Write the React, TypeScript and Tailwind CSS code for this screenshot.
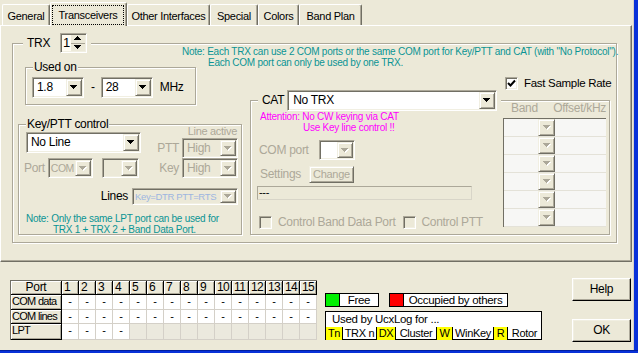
import React from "react";

// Windows classic 3D edges
const sunken =
  "border border-t-[#ACA899] border-l-[#ACA899] border-b-white border-r-white shadow-[inset_1px_1px_0_#716F64,inset_-1px_-1px_0_#F1EFE2]";
const raised =
  "border border-t-[#F1EFE2] border-l-[#F1EFE2] border-b-[#716F64] border-r-[#716F64] shadow-[inset_1px_1px_0_#fff,inset_-1px_-1px_0_#ACA899]";
const etched = "border border-[#ACA899] shadow-[inset_1px_1px_0_#fff,1px_1px_0_#fff]";
const gray = "text-[#ACA899]";
const teal = "text-[#0A9494]";

function Arrow({ disabled, up }: { disabled?: boolean; up?: boolean }) {
  const c = disabled ? "#ACA899" : "#000";
  const rows = up ? [3, 2, 1, 0] : [0, 1, 2, 3];
  return (
    <svg width="8" height="5" viewBox="0 0 8 5" shapeRendering="crispEdges">
      {disabled &&
        rows.map((r, i) => <rect key={"s" + i} x={r + 1} y={i + 1} width={7 - 2 * r} height={1} fill="#fff" />)}
      {rows.map((r, i) => (
        <rect key={i} x={r} y={i} width={7 - 2 * r} height={1} fill={c} />
      ))}
    </svg>
  );
}

function Combo({
  className = "",
  value = "",
  disabled,
  field = "bg-white",
  text = "",
}: {
  className?: string;
  value?: string;
  disabled?: boolean;
  field?: string;
  text?: string;
}) {
  return (
    <div className={`flex items-stretch p-[1px] ${sunken} ${field} ${className}`}>
      <div className={`flex-1 min-w-0 flex items-center pl-[3px] overflow-hidden whitespace-nowrap ${disabled ? gray : ""} ${text}`}>
        {value}
      </div>
      <div className={`w-[16px] shrink-0 flex items-center justify-center bg-[#ECE9D8] ${raised}`}>
        <Arrow disabled={disabled} />
      </div>
    </div>
  );
}

function Check({ checked, disabled }: { checked?: boolean; disabled?: boolean }) {
  return (
    <div className={`w-[13px] h-[13px] shrink-0 flex items-center justify-center ${sunken} ${disabled ? "bg-[#ECE9D8]" : "bg-white"}`}>
      {checked && (
        <svg width="9" height="9" viewBox="0 0 9 9">
          <path d="M1 4 L3.5 6.5 L8 1.5" stroke="#000" strokeWidth="2" fill="none" />
        </svg>
      )}
    </div>
  );
}

function Group({ className = "", label, children }: { className?: string; label?: React.ReactNode; children?: React.ReactNode }) {
  return (
    <div className={`relative ${etched} ${className}`}>
      {label && <div className="absolute top-[-7px] left-[7px] px-[1px] bg-[#ECE9D8] leading-[13px]">{label}</div>}
      {children}
    </div>
  );
}

function Tab({ label, className }: { label: string; className: string }) {
  return (
    <div
      className={`h-[21px] flex justify-center pt-[5px] border-t border-l border-r border-t-white border-l-white border-r-[#716F64] shadow-[inset_-1px_0_0_#ACA899] rounded-t-[2px] ${className}`}
    >
      {label}
    </div>
  );
}

const ports = Array.from({ length: 15 }, (_, i) => i + 1);
const headCell =
  "bg-[#ECE9D8] border-r border-b border-black shadow-[inset_1px_1px_0_#fff,inset_-1px_-1px_0_#ACA899] leading-[13px] overflow-hidden";
const btn =
  "w-[59px] h-[23px] bg-[#ECE9D8] text-[12px] border border-t-white border-l-white border-b-black border-r-black shadow-[inset_-1px_-1px_0_#ACA899,inset_1px_1px_0_#F1EFE2]";

export default function App() {
  return (
    <div className="relative w-[638px] h-[353px] overflow-hidden bg-[#ECE9D8] text-black text-[11px] leading-[13px] tracking-[-0.3px] font-['Liberation_Sans',Arial,sans-serif]">
      {/* tabs */}
      <div className="relative z-10 flex items-end h-[25px] pl-[2px]">
        <Tab label="General" className="w-[48px]" />
        <div className="w-[77px] h-[24px] mb-[-1px] bg-[#ECE9D8] border-t border-l border-r border-t-white border-l-white border-r-[#716F64] shadow-[inset_-1px_0_0_#ACA899] rounded-t-[2px] pl-[1px] pt-[2px]">
          <div className="w-[72px] h-[20px] flex items-center justify-center border border-dotted border-black">Transceivers</div>
        </div>
        <Tab label="Other Interfaces" className="w-[83px]" />
        <Tab label="Special" className="w-[48px]" />
        <Tab label="Colors" className="w-[41px]" />
        <Tab label="Band Plan" className="w-[63px]" />
      </div>

      {/* tab page */}
      <div className="w-[632px] h-[237px] border-t border-l border-r border-b border-t-white border-l-white border-r-[#716F64] border-b-[#716F64] shadow-[inset_-1px_-1px_0_#ACA899] pl-[11px] pt-[17px]">
        <div className={`relative w-[605px] h-[200px] ${etched}`}>
          <div className="absolute left-[10px] top-[-11px] flex items-center bg-[#ECE9D8] px-[4px]">
            <span className="text-[12px]">TRX</span>
            <div className={`ml-[10px] w-[27px] h-[20px] flex p-[1px] bg-[#FFFCF2] ${sunken}`}>
              <span className="flex-1 text-[13px] leading-[16px] pl-[1px]">1</span>
              <div className="w-[14px] flex flex-col bg-[#ECE9D8]">
                <div className="flex-1 flex items-center justify-center border-b border-[#ACA899]">
                  <Arrow up />
                </div>
                <div className="flex-1 flex items-center justify-center">
                  <Arrow />
                </div>
              </div>
            </div>
          </div>

          <div className={`ml-[169px] mt-[2px] h-[19px] text-[10px] leading-[11px] tracking-[-0.25px] whitespace-nowrap ${teal}`}>
            <div>Note: Each TRX can use 2 COM ports or the same COM port for Key/PTT and CAT (with "No Protocol").</div>
            <div className="pl-[26px]">Each COM port can only be used by one TRX.</div>
          </div>

          <div className="flex">
            {/* left column */}
            <div className="w-[230px] shrink-0">
              <Group label={<span className="text-[12px]">Used on</span>} className="ml-[12px] mt-[2px] w-[171px] h-[38px]">
                <div className="flex items-center pl-[6px] pt-[9px] text-[12px]">
                  <Combo value="1.8" className="w-[52px] h-[21px]" />
                  <span className="ml-[7px]">-</span>
                  <Combo value="28" className="ml-[6px] w-[52px] h-[21px]" />
                  <span className="ml-[7px]">MHz</span>
                </div>
              </Group>

              <Group label={<span className="text-[12px]">Key/PTT control</span>} className="ml-[5px] mt-[19px] w-[224px] h-[111px]">
                <div className="flex justify-between">
                  <Combo value="No Line" text="text-[12px]" className="ml-[7px] mt-[7px] w-[115px] h-[21px]" />
                  <div className="flex flex-col items-end mr-[3px]">
                    <span className={`h-[13px] pr-[1px] ${gray}`}>Line active</span>
                    <div className="flex items-center h-[20px]">
                      <span className={`text-[12px] ${gray}`}>PTT</span>
                      <Combo value="High" disabled field="bg-[#ECE9D8]" text="text-[12px]" className="ml-[3px] w-[56px] h-[20px]" />
                    </div>
                  </div>
                </div>
                <div className="flex items-center h-[20px]">
                  <span className={`ml-[5px] text-[12px] ${gray}`}>Port</span>
                  <Combo value="COM" disabled field="bg-[#ECE9D8]" text="text-[10.5px] !pl-[1px] tracking-[-0.5px]" className="ml-[3px] w-[45px] h-[20px]" />
                  <Combo disabled field="bg-[#ECE9D8]" className="ml-[9px] w-[37px] h-[20px]" />
                  <span className={`ml-auto text-[12px] ${gray}`}>Key</span>
                  <Combo value="High" disabled field="bg-[#ECE9D8]" text="text-[12px]" className="ml-[3px] mr-[3px] w-[56px] h-[20px]" />
                </div>
                <div className="flex justify-end items-center mt-[10px] mr-[3px]">
                  <span className="text-[12px]">Lines</span>
                  <Combo
                    value="Key=DTR PTT=RTS"
                    disabled
                    field="bg-[#ECE9D8]"
                    text="!text-[#9DB6E0] text-[9.5px] tracking-[-0.35px] !pl-[1px]"
                    className="ml-[4px] w-[106px] h-[17px]"
                  />
                </div>
                <div className={`mt-[8px] text-[10px] leading-[11px] tracking-[-0.25px] whitespace-nowrap ${teal}`}>
                  <div className="pl-[7px]">Note: Only the same LPT port can be used for</div>
                  <div className="pl-[34px]">TRX 1 + TRX 2 + Band Data Port.</div>
                </div>
              </Group>
            </div>

            {/* right column */}
            <div className="ml-[7px]">
              <div className="flex items-center ml-[255px] mt-[12px]">
                <Check checked />
                <span className="ml-[6px] text-[11.5px]">Fast Sample Rate</span>
              </div>

              <div className={`relative mt-[10px] w-[360px] h-[135px] flex ${etched}`}>
                <div className="absolute left-[7px] top-[-11px] flex items-center bg-[#ECE9D8] px-[4px]">
                  <span className="text-[12px]">CAT</span>
                  <Combo value="No TRX" className="ml-[3px] w-[210px] h-[21px]" text="text-[12px] !pl-[4px]" />
                </div>

                <div className="flex-1">
                  <div className="mt-[10px] text-[10px] leading-[11px] tracking-[-0.25px] text-[#FF00FF] whitespace-nowrap">
                    <div className="pl-[9px]">Attention: No CW keying via CAT</div>
                    <div className="pl-[52px]">Use Key line control !!</div>
                  </div>
                  <div className="flex items-center h-[20px] mt-[7px]">
                    <span className={`ml-[8px] text-[12px] ${gray}`}>COM port</span>
                    <Combo disabled className="ml-[10px] w-[36px] h-[20px]" />
                  </div>
                  <div className="flex items-center h-[17px] mt-[6px]">
                    <span className={`ml-[9px] text-[12px] ${gray}`}>Settings</span>
                    <div className={`ml-[8px] w-[45px] h-[17px] flex items-center justify-center bg-[#ECE9D8] ${raised} ${gray}`}>
                      Change
                    </div>
                  </div>
                  <div className="mt-[3px] ml-[6px] w-[215px] h-[14px] border border-[#ACA899] border-b-[#D8D5C8] border-r-[#D8D5C8] leading-[11px] pl-[1px]">
                    ---
                  </div>
                  <div className="flex items-center mt-[16px] text-[12px]">
                    <div className="ml-[8px]">
                      <Check disabled />
                    </div>
                    <span className={`ml-[6px] ${gray}`}>Control Band Data Port</span>
                    <div className="ml-[8px]">
                      <Check disabled />
                    </div>
                    <span className={`ml-[5px] ${gray}`}>Control PTT</span>
                  </div>
                </div>

                <div className="w-[103px] mr-[3px] pt-[1px]">
                  <div className={`flex h-[16px] text-[12px] ${gray}`}>
                    <span className="w-[52px] pl-[8px]">Band</span>
                    <span className="flex-1 text-center">Offset/kHz</span>
                  </div>
                  <div className="border-l border-t border-[#716F64]">
                    {[0, 1, 2, 3, 4, 5].map((r) => (
                      <div key={r} className="flex h-[18px] border-b border-[#E4E2D8]">
                        <div className="w-[34px] bg-[#F7F7F5]" />
                        <div className={`w-[17px] flex items-center justify-center bg-[#ECE9D8] ${raised}`}>
                          <Arrow disabled />
                        </div>
                        <div className="flex-1 bg-[#F7F7F5]" />
                      </div>
                    ))}
                  </div>
                </div>
              </div>
            </div>
          </div>
        </div>
      </div>

      {/* bottom strip */}
      <div className="flex items-start pl-[10px] pt-[16px]">
        <div className="mt-[2px] grid grid-cols-[51px_repeat(15,17px)] grid-rows-[14px_15px_14px_16px] border-t border-l border-[#716F64] text-[11px]">
          <div className={`${headCell} text-center text-[12px]`}>Port</div>
          {ports.map((p) => (
            <div key={p} className={`${headCell} pl-[2px] text-[12px] tracking-[-0.6px]`}>
              {p}
            </div>
          ))}
          {["COM data", "COM lines", "LPT"].map((row) => (
            <React.Fragment key={row}>
              <div className={`${headCell} pl-[1px] whitespace-nowrap tracking-[-0.7px]`}>{row}</div>
              {ports.map((p) =>
                row === "LPT" && p > 4 ? (
                  <div key={p} className="bg-[#EBE9DE] border-r border-b border-[#D4D0C8]" />
                ) : (
                  <div key={p} className="bg-white border-r border-b border-[#D4D0C8] text-center leading-[13px]">
                    -
                  </div>
                )
              )}
            </React.Fragment>
          ))}
        </div>

        <div className="ml-[8px] mt-[15px] flex flex-col text-[11px]">
          <div className="flex gap-[10px]">
            <div className="flex w-[54px] h-[14px] border border-black bg-white">
              <div className="w-[14px] bg-[#00F000] border-r border-black" />
              <span className="flex-1 text-center leading-[12px] text-[11.5px]">Free</span>
            </div>
            <div className="flex w-[119px] h-[14px] border border-black bg-white">
              <div className="w-[14px] bg-[#FF0000] border-r border-black" />
              <span className="flex-1 text-center leading-[12px] text-[11.5px]">Occupied by others</span>
            </div>
          </div>
          <div className="mt-[4px] w-[217px] h-[29px] border border-black bg-white flex flex-col">
            <div className="h-[15px] pl-[6px] leading-[15px] text-[11.5px]">Used by UcxLog for ...</div>
            <div className="flex flex-1 leading-[13px] whitespace-nowrap">
              <span className="w-[17px] bg-[#FFFF00] border-r border-black text-center">Tn</span>
              <span className="w-[34px] border-r border-black text-center">TRX n</span>
              <span className="w-[19px] bg-[#FFFF00] border-r border-black text-center">DX</span>
              <span className="w-[41px] border-r border-black text-center">Cluster</span>
              <span className="w-[16px] bg-[#FFFF00] border-r border-black text-center">W</span>
              <span className="w-[41px] border-r border-black text-center">WinKey</span>
              <span className="w-[14px] bg-[#FFFF00] border-r border-black text-center">R</span>
              <span className="flex-1 text-center">Rotor</span>
            </div>
          </div>
        </div>

        <div className="ml-auto mr-[7px] flex flex-col gap-[18px]">
          <button className={btn}>Help</button>
          <button className={btn}>OK</button>
        </div>
      </div>

      {/* window frame edges */}
      <div className="absolute right-0 top-0 bottom-0 w-[5px] bg-[#0831D9] border-l border-[#D4D0C8]" />
      <div className="absolute left-0 right-0 bottom-0 h-[3px] bg-[#0831D9] border-t border-[#001EA0]" />
    </div>
  );
}
